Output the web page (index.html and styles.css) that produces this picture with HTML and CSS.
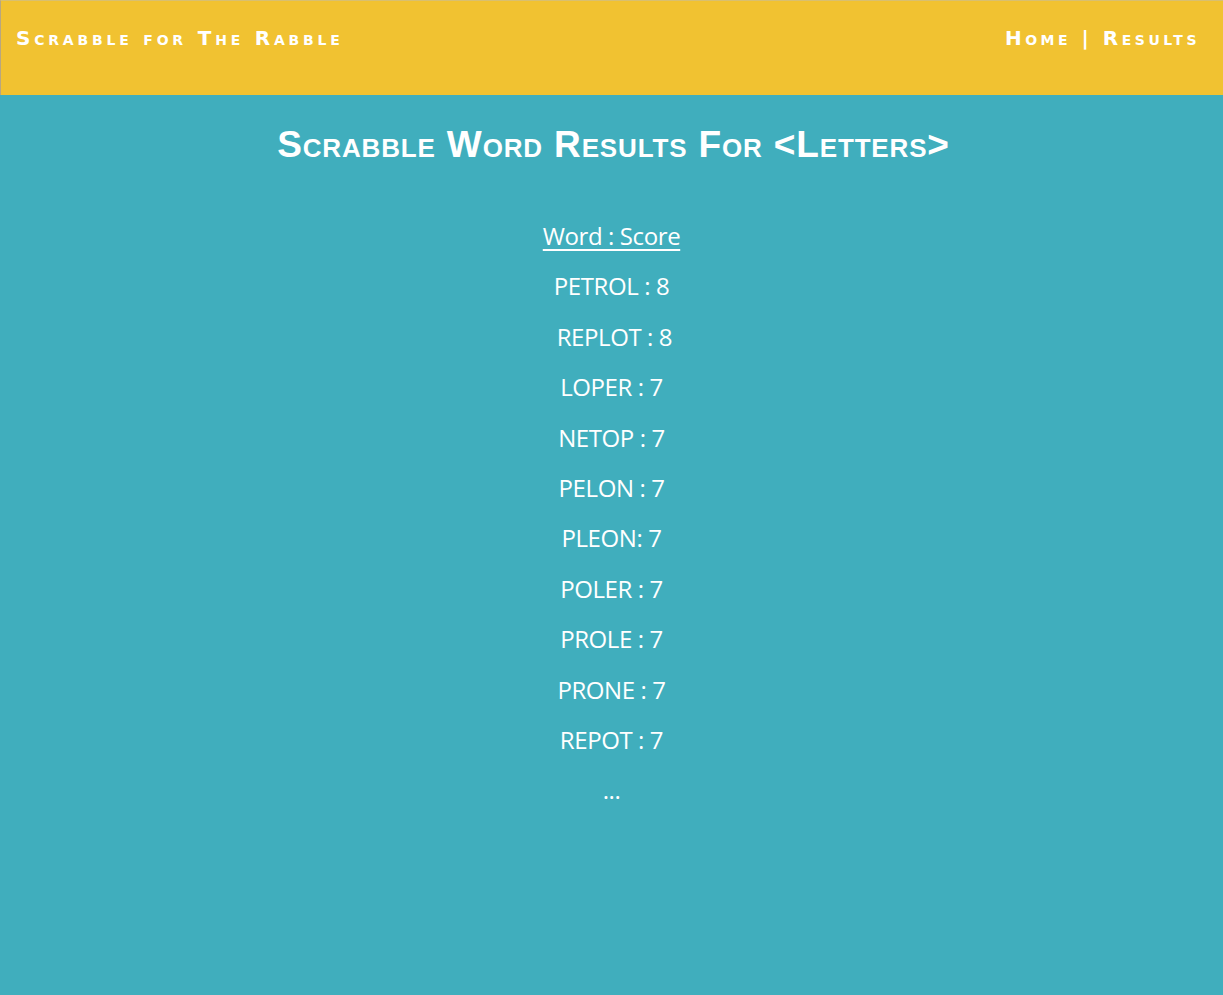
FILE: index.html
```html
<!DOCTYPE html>
<html>
<head>
<meta charset="utf-8">
<title>Scrabble for The Rabble</title>
<link rel="stylesheet" href="styles.css">
</head>
<body>
<header class="topbar">
  <div class="brand">Scrabble for The Rabble</div>
  <nav class="nav"><a href="#">Home</a> | <a href="#">Results</a></nav>
</header>
<main class="content">
  <h1 class="title">Scrabble Word Results For &lt;Letters&gt;</h1>
  <ul class="results">
    <li class="head">Word : Score</li>
    <li>PETROL : 8</li>
    <li>&nbsp;REPLOT : 8</li>
    <li>LOPER : 7</li>
    <li>NETOP : 7</li>
    <li>PELON : 7</li>
    <li>PLEON: 7</li>
    <li>POLER : 7</li>
    <li>PROLE : 7</li>
    <li>PRONE : 7</li>
    <li>REPOT : 7</li>
    <li class="more">...</li>
  </ul>
</main>
</body>
</html>
```

FILE: styles.css
```css
html, body {
  margin: 0;
  padding: 0;
  height: 100%;
}
body {
  background: #40aebd;
  font-family: "Liberation Sans", Arial, sans-serif;
  color: #fff;
}
.topbar {
  background: #f1c231;
  height: 95px;
  box-sizing: border-box;
  border-left: 1px solid #b8a680;
  border-top: 1px solid #d8bf70;
  display: flex;
  justify-content: space-between;
  align-items: flex-start;
  padding: 25px 24px 0 15px;
}
.brand, .nav {
  font-family: "DejaVu Sans", sans-serif;
  font-variant: small-caps;
  font-weight: bold;
  font-size: 20px;
  letter-spacing: 3.8px;
  color: #fff;
}
.nav {
  letter-spacing: 3.5px;
  margin-right: -1px;
}
.nav a {
  color: #fff;
  text-decoration: none;
}
.content {
  text-align: center;
}
.title {
  font-variant: small-caps;
  font-weight: bold;
  font-size: 37px;
  margin: 29px 0 0;
  letter-spacing: 0.85px;
  padding-left: 4px;
}
.results {
  list-style: none;
  margin: 45px 0 0;
  padding: 0;
  font-family: "Open Sans", sans-serif;
  font-size: 24px;
  letter-spacing: -0.4px;
}
.results li {
  height: 50.4px;
  line-height: 50.4px;
}
.results .head {
  text-decoration: underline;
  text-underline-offset: 4px;
}
```
